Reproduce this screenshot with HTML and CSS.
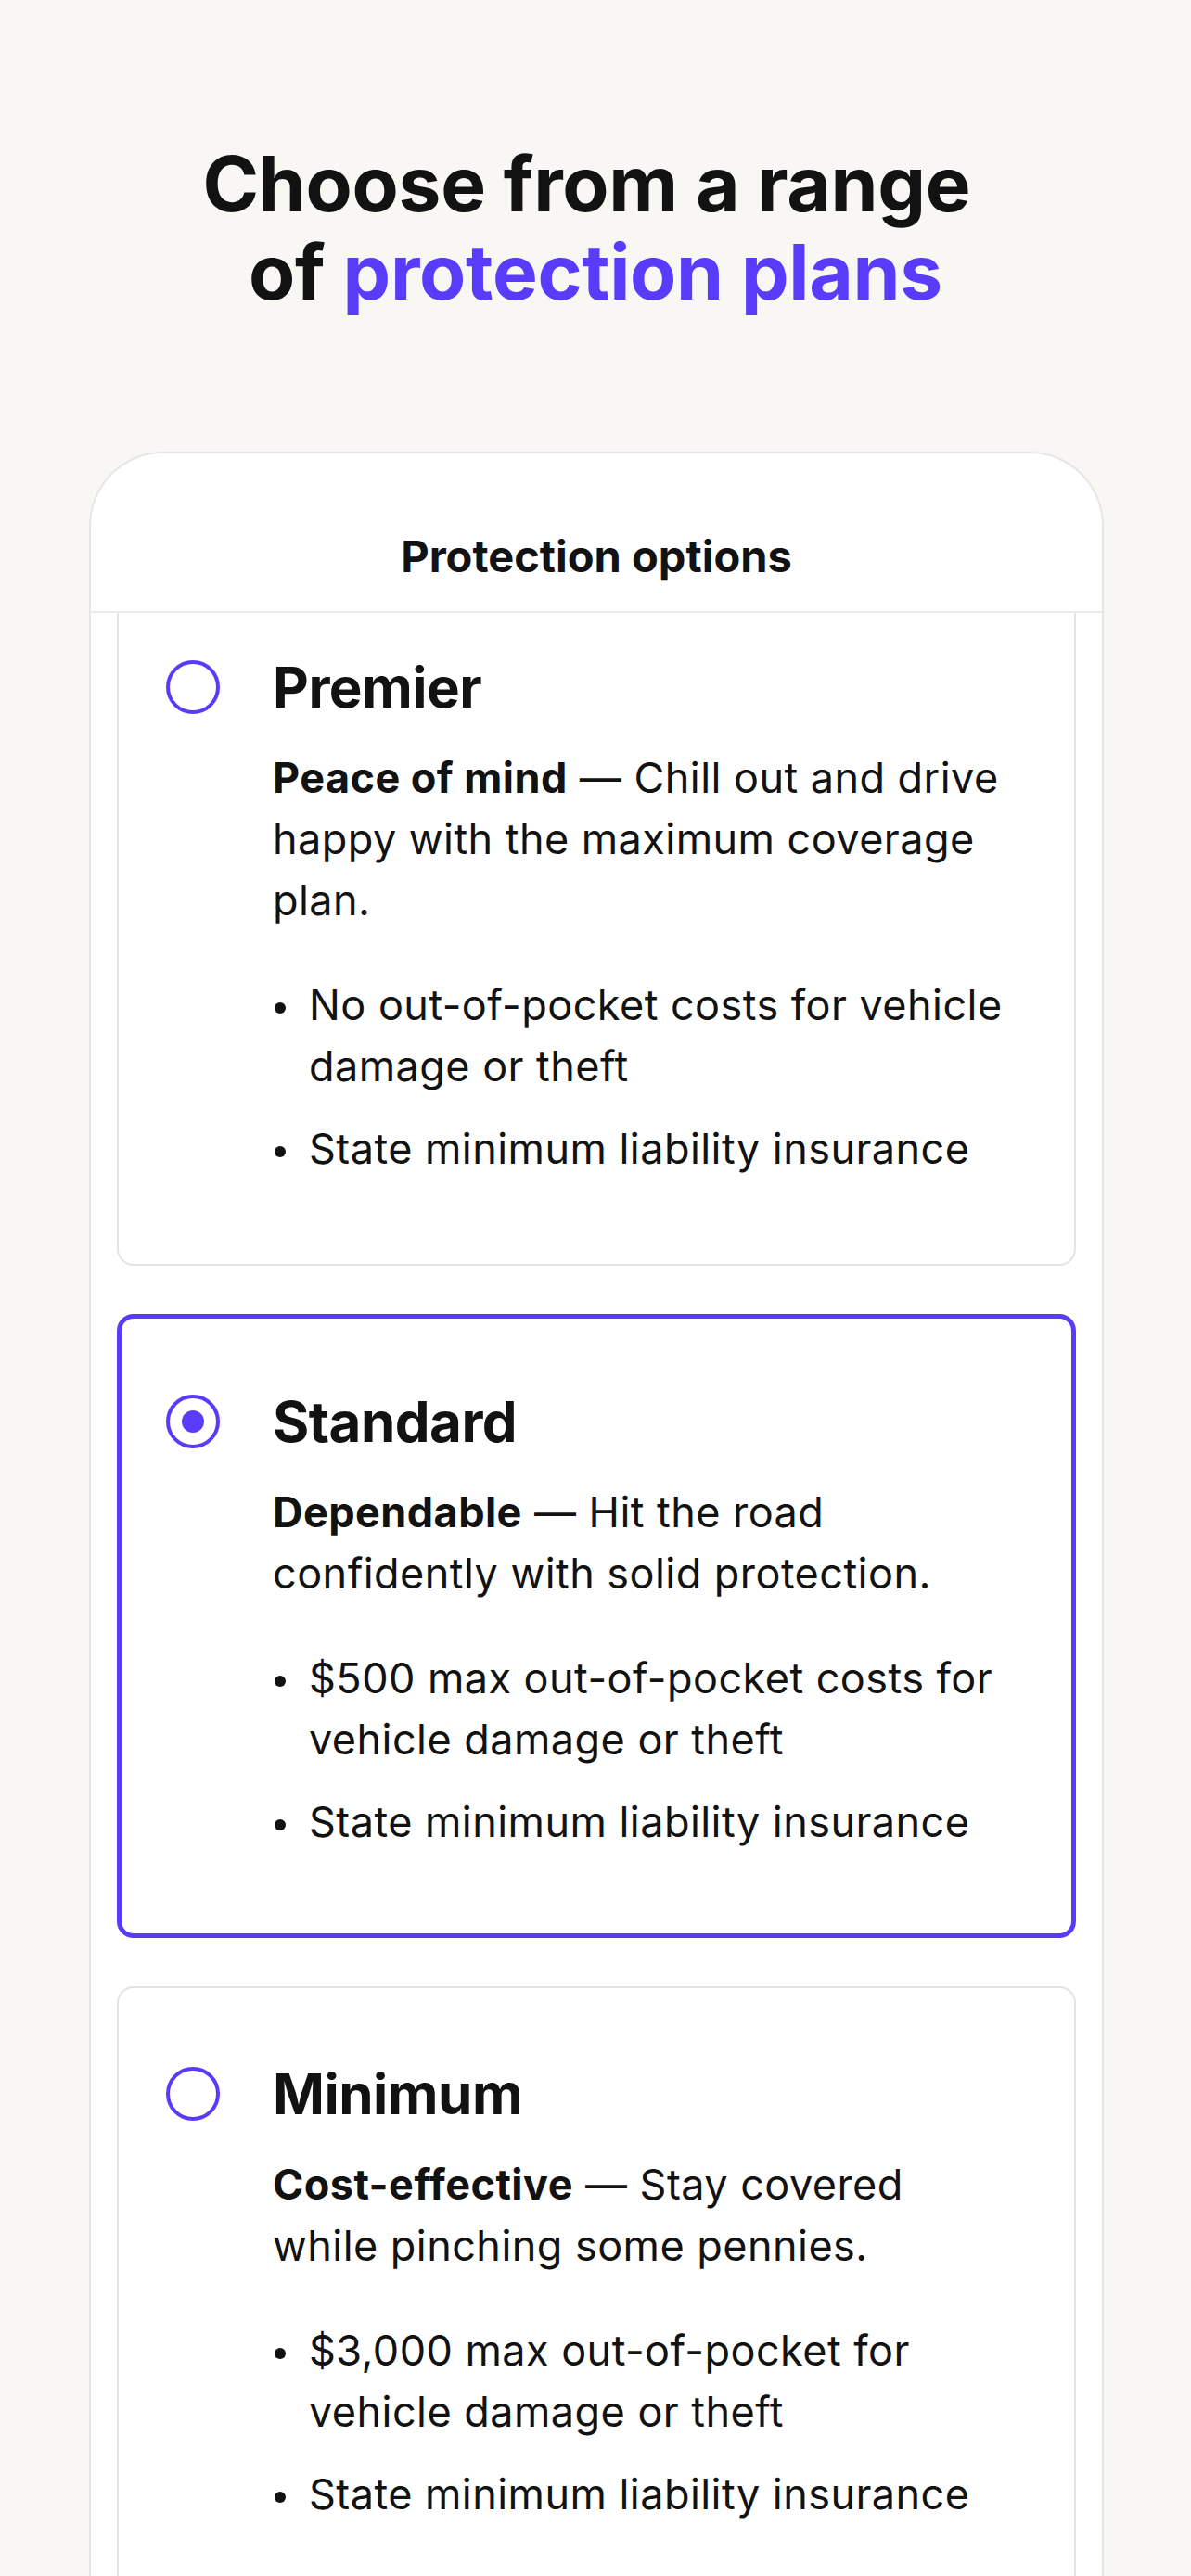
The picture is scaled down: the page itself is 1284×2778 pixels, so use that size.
FILE: index.html
```html
<!DOCTYPE html>
<html lang="en">
<head>
    <meta charset="UTF-8">
    <meta name="viewport" content="width=device-width, initial-scale=1.0">
    <title>Protection plans</title>
    <link rel="stylesheet" href="styles.css">
</head>
<body>
    <h1 class="page-title">Choose from a range <br>of <span class="accent">protection plans</span></h1>

    <div class="sheet">
        <div class="sheet-header">Protection options</div>

        <div class="plan-viewport">
            <div class="plan-list">
                <div class="plan">
                    <span class="radio"></span>
                    <div class="plan-body">
                        <h3 class="plan-name">Premier</h3>
                        <p class="plan-desc"><b>Peace of mind</b> — Chill out and drive happy with the maximum coverage plan.</p>
                        <ul class="plan-points">
                            <li>No out-of-pocket costs for vehicle damage or theft</li>
                            <li>State minimum liability insurance</li>
                        </ul>
                    </div>
                </div>

                <div class="plan selected">
                    <span class="radio"></span>
                    <div class="plan-body">
                        <h3 class="plan-name">Standard</h3>
                        <p class="plan-desc"><b>Dependable</b> — Hit the road confidently with solid protection.</p>
                        <ul class="plan-points">
                            <li>$500 max out-of-pocket costs for vehicle damage or theft</li>
                            <li>State minimum liability insurance</li>
                        </ul>
                    </div>
                </div>

                <div class="plan">
                    <span class="radio"></span>
                    <div class="plan-body">
                        <h3 class="plan-name">Minimum</h3>
                        <p class="plan-desc"><b>Cost-effective</b> — Stay covered while pinching some pennies.</p>
                        <ul class="plan-points">
                            <li>$3,000 max out-of-pocket for vehicle damage or theft</li>
                            <li>State minimum liability insurance</li>
                        </ul>
                    </div>
                </div>
            </div>
        </div>
    </div>
</body>
</html>
```

FILE: styles.css
```css
body {
    margin: 0;
    background-color: #f8f7f4;
    font-family: Inter, "Noto Sans", sans-serif;
    color: #121212;
}

.page-title {
    margin: 0;
    padding-top: 151px;
    text-align: center;
    font-size: 82px;
    line-height: 95px;
    font-weight: 700;
    letter-spacing: -0.3px;
    white-space: break-spaces; /* keep the trailing space, like the app does */
}

.accent {
    color: #593cfb;
}

.sheet {
    margin: 146px 94px 0 96px;
    background-color: white;
    border: 2px solid #e6e6e4;
    border-bottom: none;
    border-radius: 80px 80px 0 0;
}

.sheet-header {
    padding: 83px 0 31px;
    text-align: center;
    font-size: 47px;
    line-height: 56px;
    font-weight: 700;
    border-bottom: 2px solid #ebebea;
}

.plan-viewport {
    overflow: hidden;
    padding: 0 28px;
}

.plan-list {
    display: flex;
    flex-direction: column;
    gap: 52px;
    margin-top: -36px;
}

.plan {
    display: grid;
    grid-template-columns: 58px 1fr;
    column-gap: 57px;
    padding: 78px 67px 91px 51px;
    border: 2px solid #e4e4e2;
    border-radius: 18px;
    background: white;
}

.plan.selected {
    border: 5px solid #593cfb;
    padding: 75px 64px 87px 48px;
}

.radio {
    width: 58px;
    height: 58px;
    margin-top: 7px;
    box-sizing: border-box;
    border: 4.5px solid #593cfb;
    border-radius: 50%;
    display: flex;
    align-items: center;
    justify-content: center;
}

.selected .radio::after {
    content: "";
    width: 24px;
    height: 24px;
    border-radius: 50%;
    background: #593cfb;
}

.plan-name {
    margin: 0;
    font-size: 60px;
    line-height: 72px;
    font-weight: 700;
    letter-spacing: -0.5px;
}

.plan-desc {
    margin: 29px 0 0;
    font-size: 45px;
    line-height: 66px;
    letter-spacing: 0.45px;
}

.plan-desc b {
    font-weight: 700;
}

.plan-points {
    list-style: none;
    margin: 47px 0 0;
    padding: 0;
    font-size: 45px;
    line-height: 66px;
    letter-spacing: 0.45px;
}

.plan-points li {
    position: relative;
    padding-left: 39px;
}

.plan-points li + li {
    margin-top: 23px;
}

.plan-points li::before {
    content: "";
    position: absolute;
    left: 2px;
    top: 30px;
    width: 12px;
    height: 12px;
    border-radius: 50%;
    background: #121212;
}
```
